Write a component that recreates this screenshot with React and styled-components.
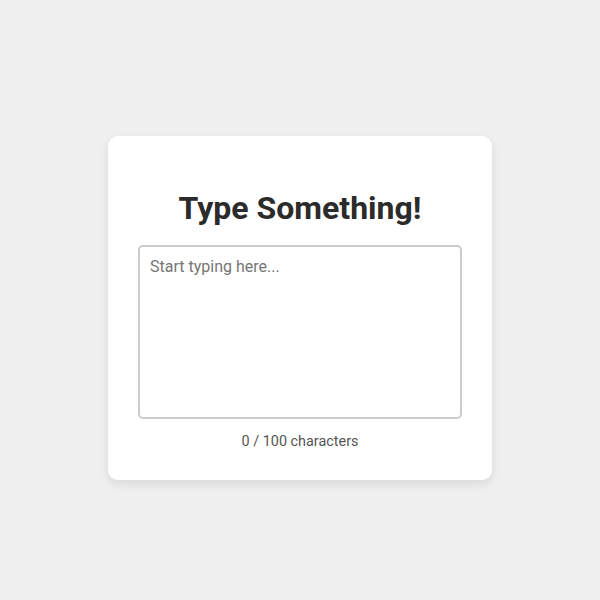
import React, { useState } from 'react';
import styled, { createGlobalStyle } from 'styled-components';

const GlobalStyle = createGlobalStyle`
  html, body {
    margin: 0;
    padding: 0;
    background-color: #f0f0f0;
    font-family: Roboto, "Liberation Sans", sans-serif;
  }
`;

const Page = styled.div`
  box-sizing: border-box;
  height: 600px;
  padding-top: 16px;
  display: flex;
  justify-content: center;
  align-items: center;
`;

const Card = styled.div`
  box-sizing: border-box;
  width: 384px;
  padding: 54px 30px 30px;
  border-radius: 10px;
  background-color: #ffffff;
  box-shadow: 0 4px 12px rgba(0, 0, 0, 0.1);
  text-align: center;
`;

const Title = styled.h1`
  margin: 0 0 18px;
  color: #2b2b2b;
  font-size: 32px;
  font-weight: 700;
  line-height: 37px;
`;

const TextArea = styled.textarea`
  display: block;
  box-sizing: border-box;
  width: 100%;
  height: 174px;
  padding: 10px;
  border: 2px solid #cccccc;
  border-radius: 5px;
  resize: none;
  outline: none;
  font-family: Roboto, "Liberation Sans", sans-serif;
  font-size: 16px;
  color: #333333;
  &::placeholder {
    color: #757575;
  }
`;

const Counter = styled.p`
  margin: 15px 0 0;
  color: #555555;
  font-size: 14.4px;
  line-height: 16px;
`;

export default function App() {
  const [text, setText] = useState('');
  const max = 100;

  return (
    <>
      <GlobalStyle />
      <Page>
        <Card>
          <Title>Type Something!</Title>
          <TextArea
            placeholder="Start typing here..."
            maxLength={max}
            value={text}
            onChange={(e) => setText(e.target.value)}
          />
          <Counter>{text.length} / {max} characters</Counter>
        </Card>
      </Page>
    </>
  );
}
